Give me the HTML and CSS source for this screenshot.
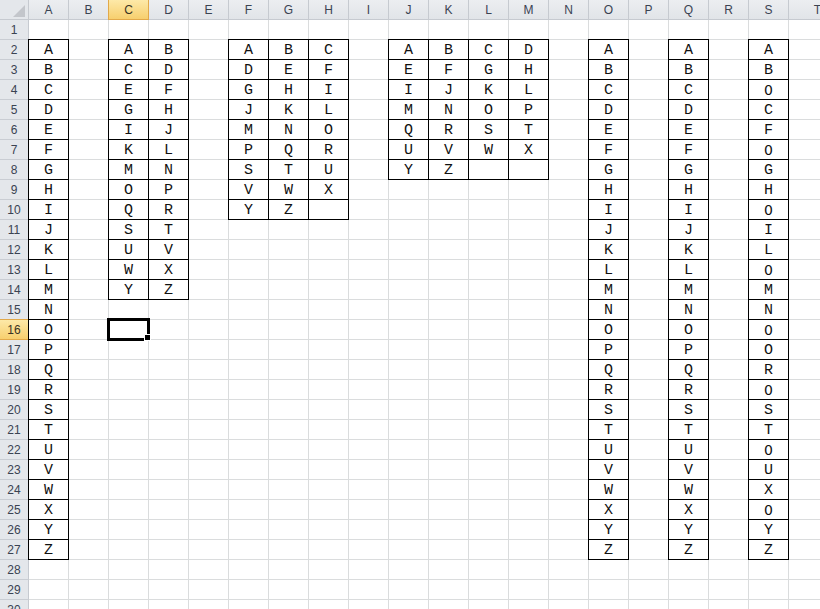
FILE: index.html
```html
<!DOCTYPE html>
<html>
<head>
<meta charset="utf-8">
<link rel="stylesheet" href="styles.css">
</head>
<body>
<div class="sheet">
  <div class="corner">
    <svg width="29" height="20" viewBox="0 0 29 20"><polygon points="25,5 25,17 13,17" fill="#c3c6cb"/></svg>
  </div>
  <div class="colheads">
    <div class="ch">A</div><div class="ch">B</div><div class="ch sel">C</div><div class="ch">D</div><div class="ch">E</div><div class="ch">F</div><div class="ch">G</div><div class="ch">H</div><div class="ch">I</div><div class="ch">J</div><div class="ch">K</div><div class="ch">L</div><div class="ch">M</div><div class="ch">N</div><div class="ch">O</div><div class="ch">P</div><div class="ch">Q</div><div class="ch">R</div><div class="ch">S</div><div class="ch last">T</div>
  </div>
  <div class="rowheads">
    <div class="rh">1</div><div class="rh">2</div><div class="rh">3</div><div class="rh">4</div><div class="rh">5</div><div class="rh">6</div><div class="rh">7</div><div class="rh">8</div><div class="rh">9</div><div class="rh">10</div><div class="rh">11</div><div class="rh">12</div><div class="rh">13</div><div class="rh">14</div><div class="rh">15</div><div class="rh sel">16</div><div class="rh">17</div><div class="rh">18</div><div class="rh">19</div><div class="rh">20</div><div class="rh">21</div><div class="rh">22</div><div class="rh">23</div><div class="rh">24</div><div class="rh">25</div><div class="rh">26</div><div class="rh">27</div><div class="rh">28</div><div class="rh">29</div><div class="rh">30</div>
  </div>
  <div class="cells">
    <div class="block c1">
      <div>A</div><div>B</div><div>C</div><div>D</div><div>E</div><div>F</div><div>G</div><div>H</div><div>I</div><div>J</div><div>K</div><div>L</div><div>M</div><div>N</div><div>O</div><div>P</div><div>Q</div><div>R</div><div>S</div><div>T</div><div>U</div><div>V</div><div>W</div><div>X</div><div>Y</div><div>Z</div>
    </div>
    <div class="block c2">
      <div>A</div><div>B</div><div>C</div><div>D</div><div>E</div><div>F</div><div>G</div><div>H</div><div>I</div><div>J</div><div>K</div><div>L</div><div>M</div><div>N</div><div>O</div><div>P</div><div>Q</div><div>R</div><div>S</div><div>T</div><div>U</div><div>V</div><div>W</div><div>X</div><div>Y</div><div>Z</div>
    </div>
    <div class="block c3">
      <div>A</div><div>B</div><div>C</div><div>D</div><div>E</div><div>F</div><div>G</div><div>H</div><div>I</div><div>J</div><div>K</div><div>L</div><div>M</div><div>N</div><div>O</div><div>P</div><div>Q</div><div>R</div><div>S</div><div>T</div><div>U</div><div>V</div><div>W</div><div>X</div><div>Y</div><div>Z</div><div></div>
    </div>
    <div class="block c4">
      <div>A</div><div>B</div><div>C</div><div>D</div><div>E</div><div>F</div><div>G</div><div>H</div><div>I</div><div>J</div><div>K</div><div>L</div><div>M</div><div>N</div><div>O</div><div>P</div><div>Q</div><div>R</div><div>S</div><div>T</div><div>U</div><div>V</div><div>W</div><div>X</div><div>Y</div><div>Z</div><div></div><div></div>
    </div>
    <div class="block c1">
      <div>A</div><div>B</div><div>C</div><div>D</div><div>E</div><div>F</div><div>G</div><div>H</div><div>I</div><div>J</div><div>K</div><div>L</div><div>M</div><div>N</div><div>O</div><div>P</div><div>Q</div><div>R</div><div>S</div><div>T</div><div>U</div><div>V</div><div>W</div><div>X</div><div>Y</div><div>Z</div>
    </div>
    <div class="block c1">
      <div>A</div><div>B</div><div>C</div><div>D</div><div>E</div><div>F</div><div>G</div><div>H</div><div>I</div><div>J</div><div>K</div><div>L</div><div>M</div><div>N</div><div>O</div><div>P</div><div>Q</div><div>R</div><div>S</div><div>T</div><div>U</div><div>V</div><div>W</div><div>X</div><div>Y</div><div>Z</div>
    </div>
    <div class="block c1">
      <div>A</div><div>B</div><div class="num">0</div><div>C</div><div>F</div><div class="num">0</div><div>G</div><div>H</div><div class="num">0</div><div>I</div><div>L</div><div class="num">0</div><div>M</div><div>N</div><div class="num">0</div><div>O</div><div>R</div><div class="num">0</div><div>S</div><div>T</div><div class="num">0</div><div>U</div><div>X</div><div class="num">0</div><div>Y</div><div>Z</div>
    </div>
    <div class="selection"></div>
    <div class="handle"></div>
  </div>
</div>
</body>
</html>
```

FILE: styles.css
```css
html, body {
  margin: 0;
  padding: 0;
  background: #fff;
}
body {
  width: 820px;
  height: 609px;
  overflow: hidden;
}
.sheet {
  display: grid;
  grid-template-columns: 29px 818px;
  grid-template-rows: 20px 600px;
}
.corner {
  background: #e4e7eb;
  border-right: 1px solid #c6cad0;
  border-bottom: 1px solid #c6cad0;
  box-sizing: border-box;
  height: 20px;
}
.corner svg {
  display: block;
}
.colheads {
  display: flex;
  height: 20px;
}
.ch {
  flex: 0 0 40px;
  box-sizing: border-box;
  height: 20px;
  border-right: 1px solid #c6cad0;
  border-bottom: 1px solid #c6cad0;
  background: linear-gradient(#eceef1, #e1e4e8);
  font: 12px "Liberation Sans", Arial, sans-serif;
  color: #3a4352;
  display: flex;
  align-items: center;
  justify-content: center;
  padding-top: 1px;
}
.ch.last {
  flex-basis: 58px;
}
.ch.sel, .rh.sel {
  background: linear-gradient(#fde9a8, #f7cf6e);
  border-right-color: #e2a94a;
  border-bottom-color: #e2a94a;
  color: #3a3424;
}
.ch.sel {
  border-left: 1px solid #e2a94a;
  margin-left: -1px;
  flex-basis: 41px;
}
.rowheads {
  display: flex;
  flex-direction: column;
}
.rh {
  flex: 0 0 20px;
  box-sizing: border-box;
  border-right: 1px solid #c6cad0;
  border-bottom: 1px solid #c9cdd3;
  background: #e4e7eb;
  font: 12px "Liberation Sans", Arial, sans-serif;
  color: #3a4352;
  display: flex;
  align-items: center;
  justify-content: center;
  padding-top: 1px;
}
.rh.sel {
  border-top: 1px solid #e2a94a;
  margin-top: -1px;
  flex-basis: 21px;
}
.cells {
  position: relative;
  box-sizing: border-box;
  padding-top: 20px;
  display: flex;
  align-items: flex-start;
  gap: 40px;
  background-image:
    repeating-linear-gradient(to right, transparent 0 39px, #dadcdd 39px 40px),
    repeating-linear-gradient(to bottom, transparent 0 19px, #dadcdd 19px 20px);
}
.block {
  display: grid;
  grid-auto-rows: 20px;
  margin: -1px 0 0 -1px;
  border-left: 1px solid #000;
  border-top: 1px solid #000;
  background: #fff;
}
.block.c1 { grid-template-columns: 40px; }
.block.c2 { grid-template-columns: repeat(2, 40px); }
.block.c3 { grid-template-columns: repeat(3, 40px); }
.block.c4 { grid-template-columns: repeat(4, 40px); }
.block > div {
  box-sizing: border-box;
  border-right: 1px solid #000;
  border-bottom: 1px solid #000;
  font: 15px "Liberation Mono", "DejaVu Sans Mono", monospace;
  color: #111;
  display: flex;
  align-items: center;
  justify-content: center;
  padding-top: 1px;
}
.block > div.num {
  font: 14px "DejaVu Sans", sans-serif;
}
.selection {
  position: absolute;
  left: 78px;
  top: 298px;
  width: 43px;
  height: 23px;
  box-sizing: border-box;
  border: 3px solid #000;
}
.handle {
  position: absolute;
  left: 116px;
  top: 315px;
  width: 5px;
  height: 5px;
  background: #000;
  outline: 1px solid #fff;
}
```
